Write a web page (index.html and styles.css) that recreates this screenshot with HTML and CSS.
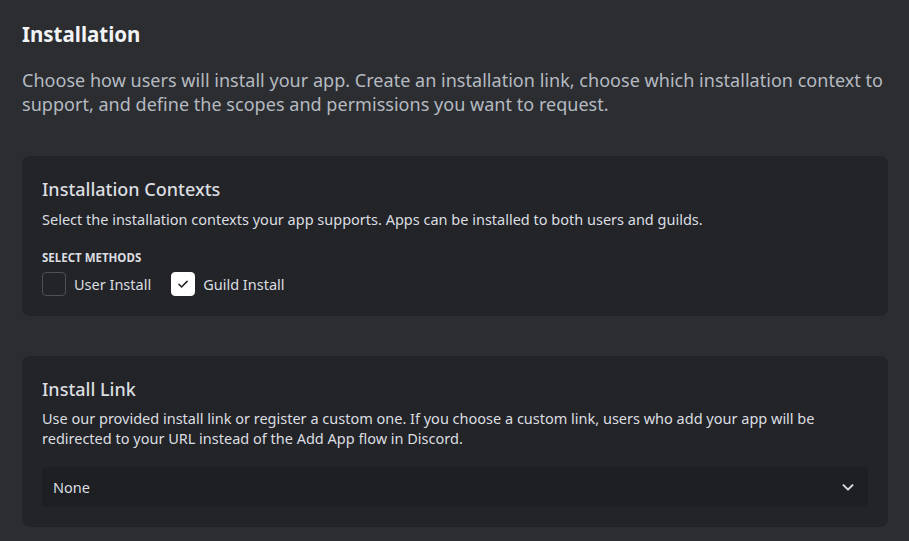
FILE: index.html
```html
<!DOCTYPE html>
<html>
<head>
<meta charset="utf-8">
<link rel="stylesheet" href="styles.css">
</head>
<body>
<main class="page">
  <h1 class="title">Installation</h1>
  <p class="lead">Choose how users will install your app. Create an installation link, choose which installation context to support, and define the scopes and permissions you want to request.</p>

  <section class="card">
    <h2 class="card-title">Installation Contexts</h2>
    <p class="card-desc">Select the installation contexts your app supports. Apps can be installed to both users and guilds.</p>
    <div class="label">SELECT METHODS</div>
    <div class="checks">
      <label class="check">
        <span class="box"></span>
        <span class="check-text">User Install</span>
      </label>
      <label class="check">
        <span class="box box-on">
          <svg width="14" height="14" viewBox="0 0 24 24"><path d="M5 12.5l4.5 4.5L19 7.5" fill="none" stroke="#1e1f22" stroke-width="2.6" stroke-linecap="round" stroke-linejoin="round"/></svg>
        </span>
        <span class="check-text">Guild Install</span>
      </label>
    </div>
  </section>

  <section class="card card-link">
    <h2 class="card-title">Install Link</h2>
    <p class="card-desc">Use our provided install link or register a custom one. If you choose a custom link, users who add your app will be redirected to your URL instead of the Add App flow in Discord.</p>
    <div class="select">
      <span class="select-value">None</span>
      <svg class="chev" width="18" height="18" viewBox="0 0 24 24"><path d="M6 9.5l6 6 6-6" fill="none" stroke="#dbdee1" stroke-width="2.6" stroke-linecap="round" stroke-linejoin="round"/></svg>
    </div>
  </section>
</main>
</body>
</html>
```
FILE: styles.css
```css
* { box-sizing: border-box; }
html, body { margin: 0; padding: 0; }
body {
  background: #2b2d31;
  font-family: "Noto Sans", "Open Sans", sans-serif;
  color: #dbdee1;
  height: 541px;
  overflow: hidden;
}
.page {
  padding: 20px 21px 0 22px;
}
.title {
  margin: 0;
  font-size: 20.5px;
  font-weight: 700;
  color: #f2f3f5;
  line-height: 28px;
}
.lead {
  margin: 20px 0 0;
  font-size: 18px;
  line-height: 24px;
  color: #b5bac1;
  letter-spacing: 0.03px;
}
.card {
  background: #232428;
  border-radius: 8px;
  padding: 22px 20px 20px;
  margin-top: 40px;
}
.card-link { margin-top: 40px; padding-bottom: 20px; }
.card-title {
  margin: 0;
  font-size: 18px;
  font-weight: 500;
  line-height: 22px;
  color: #dbdee1;
}
.card-desc {
  margin: 9px 0 0;
  font-size: 14.5px;
  line-height: 20px;
  color: #dbdee1;
}
.card-link .card-desc { margin-top: 8px; }
.label {
  margin-top: 22px;
  font-size: 11.5px;
  font-weight: 700;
  line-height: 14px;
  color: #dbdee1;
}
.checks {
  display: flex;
  gap: 20px;
  margin-top: 7px;
}
.check {
  display: flex;
  align-items: center;
  gap: 8px;
}
.box {
  width: 24px;
  height: 24px;
  border: 1px solid #4e5058;
  border-radius: 4px;
  display: flex;
  align-items: center;
  justify-content: center;
}
.box-on {
  background: #ffffff;
  border-color: #ffffff;
}
.check-text {
  font-size: 14.5px;
  line-height: 20px;
  color: #dbdee1;
}
.select {
  margin-top: 19px;
  height: 40px;
  background: #1e1f22;
  border-radius: 4px;
  display: flex;
  align-items: center;
  justify-content: space-between;
  padding: 0 11px;
}
.select-value {
  font-size: 14.5px;
  color: #dbdee1;
}
.chev { display: block; }
```
